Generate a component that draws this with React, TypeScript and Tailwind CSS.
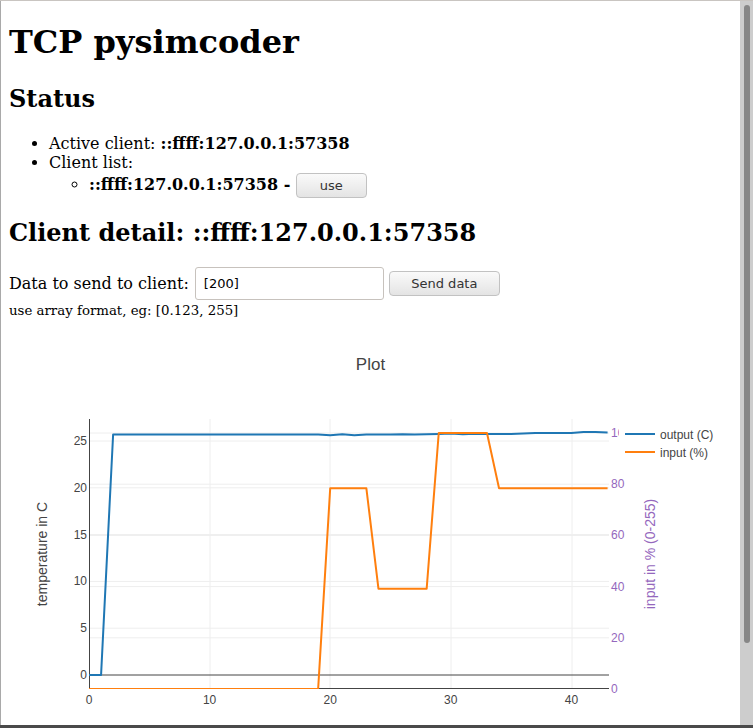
import React from 'react';

const X0 = 80;
const XS = 12.06;
const yLeft = (v: number) => 356 - v * 9.36;
const yRight = (v: number) => 370 - v * 2.56;
const px = (x: number) => X0 + x * XS;

const output = [
  0, 0, 25.7, 25.7, 25.7, 25.7, 25.7, 25.7, 25.7, 25.7, 25.7, 25.7, 25.7, 25.7, 25.7, 25.7, 25.7, 25.7, 25.7, 25.7,
  25.62, 25.72, 25.62, 25.7, 25.7, 25.7, 25.72, 25.7, 25.72, 25.75, 25.8, 25.72, 25.78, 25.76, 25.76, 25.76, 25.8,
  25.85, 25.85, 25.85, 25.85, 25.95, 25.95, 25.9,
];
const input = [
  0, 0, 0, 0, 0, 0, 0, 0, 0, 0, 0, 0, 0, 0, 0, 0, 0, 0, 0, 0, 78.4, 78.4, 78.4, 78.4, 39.2, 39.2, 39.2, 39.2, 39.2,
  100, 100, 100, 100, 100, 78.4, 78.4, 78.4, 78.4, 78.4, 78.4, 78.4, 78.4, 78.4, 78.4,
];

function Plot() {
  const outPts = output.map((v, i) => `${px(i)},${yLeft(v)}`).join(' ');
  const inPts = input.map((v, i) => `${px(i)},${yRight(v)}`).join(' ');
  const font = { fontFamily: '"Liberation Sans", Arial, sans-serif' };
  return (
    <svg width="723" height="450" viewBox="0 0 723 450" className="block" style={font}>
      <defs>
        <clipPath id="plotarea">
          <rect x="80" y="100" width="520" height="270" />
        </clipPath>
      </defs>
      <text x="361.5" y="51" textAnchor="middle" fontSize="17" fill="#444">Plot</text>

      {[201, 321, 442, 563].map((x) => (
        <line key={x} x1={x} x2={x} y1="100" y2="370" stroke="#eee" />
      ))}
      {[5, 10, 15, 20, 25].map((v) => (
        <line key={'l' + v} x1="80" x2="600" y1={yLeft(v)} y2={yLeft(v)} stroke="#eee" />
      ))}
      {[20, 40, 60, 80, 100].map((v) => (
        <line key={'r' + v} x1="80" x2="600" y1={yRight(v)} y2={yRight(v)} stroke="#eee" />
      ))}
      <line x1="80" x2="600" y1={yLeft(0)} y2={yLeft(0)} stroke="#444" />
      <line x1="80" x2="600" y1="369.5" y2="369.5" stroke="#444" />
      <line x1="80.5" x2="80.5" y1="100" y2="370" stroke="#444" />

      <g clipPath="url(#plotarea)">
        <polyline points={outPts} fill="none" stroke="#1f77b4" strokeWidth="2" strokeLinejoin="round" />
        <polyline points={inPts} fill="none" stroke="#ff7f0e" strokeWidth="2" strokeLinejoin="round" />
      </g>

      {[0, 5, 10, 15, 20, 25].map((v) => (
        <text key={'lt' + v} x="78" y={yLeft(v) + 4} textAnchor="end" fontSize="12" fill="#444">{v}</text>
      ))}
      {[0, 20, 40, 60, 80, 100].map((v) => (
        <text key={'rt' + v} x="602" y={yRight(v) + 4} fontSize="12" fill="#9467bd">{v}</text>
      ))}
      {[0, 10, 20, 30, 40].map((v) => (
        <text key={'xt' + v} x={px(v)} y="385" textAnchor="middle" fontSize="12" fill="#444">{v}</text>
      ))}

      <text x="38" y="235" transform="rotate(-90 38 235)" textAnchor="middle" fontSize="14" fill="#444">temperature in C</text>
      <text x="646" y="235" transform="rotate(-90 646 235)" textAnchor="middle" fontSize="14" fill="#9467bd">input in % (0-255)</text>

      <rect x="610" y="100" width="100" height="46" fill="#fff" />
      <line x1="616" x2="646" y1="115" y2="115" stroke="#1f77b4" strokeWidth="2" />
      <text x="651" y="119.5" fontSize="12" fill="#444">output (C)</text>
      <line x1="616" x2="646" y1="133" y2="133" stroke="#ff7f0e" strokeWidth="2" />
      <text x="651" y="137.5" fontSize="12" fill="#444">input (%)</text>
    </svg>
  );
}

const btn =
  "font-['DejaVu_Sans'] text-[13px] text-[#333] border border-[#c2c2c2] rounded-[4px] bg-gradient-to-b from-[#fafafa] to-[#e4e4e4] leading-none";

export default function App() {
  return (
    <div className="w-[753px] h-[728px] overflow-hidden flex flex-col bg-white border-t border-[#c9c5c1]">
      <div className="flex flex-1 min-h-0">
        <div className="w-px bg-[#a9a9a9]" />
        <div className="flex-1 min-w-0 overflow-hidden px-2 font-['DejaVu_Serif'] text-black">
          <h1 className="text-[32px] font-bold leading-[37px] mt-[23px] mb-[24px]">TCP pysimcoder</h1>
          <h2 className="text-[24px] font-bold leading-[28px] mt-[20px] mb-[21px]">Status</h2>
          <ul className="list-disc pl-10 text-[16px] leading-[19px] my-4">
            <li>
              Active client: <b>::ffff:127.0.0.1:57358</b>
            </li>
            <li>
              Client list:
              <ul className="list-[circle] pl-10 mt-[1px]">
                <li>
                  <b>::ffff:127.0.0.1:57358 - </b>
                  <button className={`${btn} w-[71px] h-[25px] align-middle`}>use</button>
                </li>
              </ul>
            </li>
          </ul>
          <h2 className="text-[24px] font-bold leading-[28px] mt-[21px] mb-[20px]">Client detail: ::ffff:127.0.0.1:57358</h2>
          <div className="flex items-center text-[16px] h-[33px]">
            <span>Data to send to client:</span>
            <input
              defaultValue="[200]"
              className="ml-[6px] w-[189px] h-[33px] border border-[#c7c2bd] rounded-[3px] px-2 font-['DejaVu_Sans'] text-[13px] bg-white"
            />
            <button className={`${btn} ml-[5px] w-[111px] h-[25px]`}>Send data</button>
          </div>
          <div className="text-[13.33px] leading-[16px] mt-[3px]">use array format, eg: [0.123, 255]</div>
          <Plot />
        </div>
        <div className="w-[13px] bg-[#cdcdcd] pt-[4px] flex justify-center">
          <div className="w-[6px] h-[638px] bg-[#878787] rounded-[3px]" />
        </div>
      </div>
      <div className="h-[3px] bg-[#4a4a4a]" />
    </div>
  );
}
